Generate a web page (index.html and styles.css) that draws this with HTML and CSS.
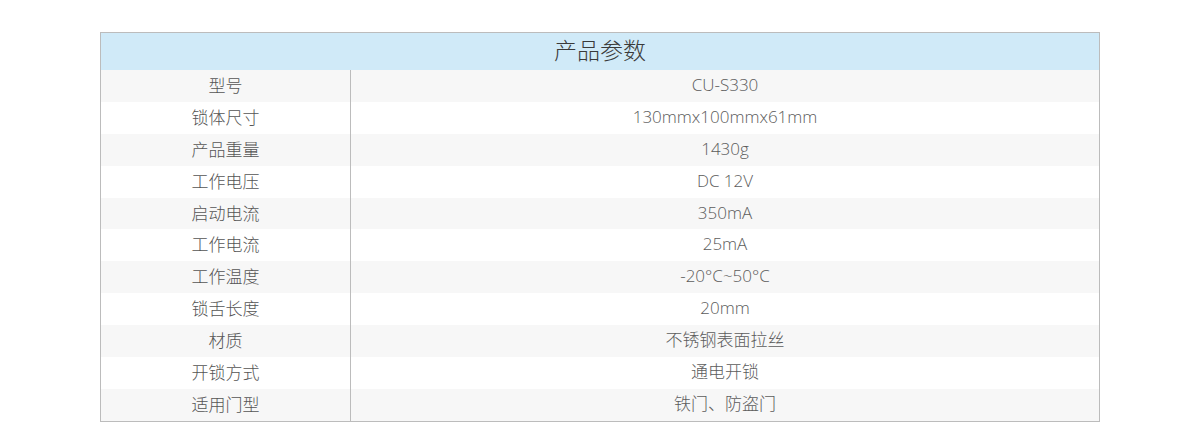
FILE: index.html
```html
<!DOCTYPE html>
<html lang="zh-CN">
<head>
<meta charset="utf-8">
<title>产品参数</title>
<link rel="stylesheet" href="styles.css">
</head>
<body>
<div class="wrap">
  <table class="spec">
    <colgroup>
      <col class="col-k">
      <col class="col-v">
    </colgroup>
    <thead>
      <tr><th colspan="2">产品参数</th></tr>
    </thead>
    <tbody>
      <tr><td class="k">型号</td><td>CU-S330</td></tr>
      <tr><td class="k">锁体尺寸</td><td>130mmx100mmx61mm</td></tr>
      <tr><td class="k">产品重量</td><td>1430g</td></tr>
      <tr><td class="k">工作电压</td><td>DC 12V</td></tr>
      <tr><td class="k">启动电流</td><td>350mA</td></tr>
      <tr><td class="k">工作电流</td><td>25mA</td></tr>
      <tr><td class="k">工作温度</td><td>-20°C~50°C</td></tr>
      <tr><td class="k">锁舌长度</td><td>20mm</td></tr>
      <tr><td class="k">材质</td><td>不锈钢表面拉丝</td></tr>
      <tr><td class="k">开锁方式</td><td>通电开锁</td></tr>
      <tr><td class="k">适用门型</td><td>铁门、防盗门</td></tr>
    </tbody>
  </table>
</div>
</body>
</html>
```
FILE: styles.css
```css
html, body {
  margin: 0;
  padding: 0;
  background: #fff;
}
body {
  font-family: "Open Sans", "Noto Sans CJK SC", sans-serif;
  color: #555;
}
.wrap {
  padding-top: 32px;
  display: flex;
  justify-content: center;
}
.spec {
  width: 1000px;
  border-collapse: collapse;
  table-layout: fixed;
  border: 1px solid #bcbcbc;
}
.col-k {
  width: 250px;
}
.spec th {
  height: 32px;
  padding: 0 0 5px;
  background: #d0eaf8;
  font-weight: 300;
  font-size: 23px;
  line-height: 28px;
  color: #3a3a3a;
  text-align: center;
  font-family: "Noto Sans CJK SC", sans-serif;
}
.spec td {
  height: 29.9px;
  padding: 0 0 2px;
  text-align: center;
  font-size: 17px;
  font-weight: 300;
  line-height: 20px;
  color: #5c5c5c;
}
.spec td.k {
  border-right: 1px solid #bcbcbc;
  font-family: "Noto Sans CJK SC", sans-serif;
  color: #555;
}
.spec tbody tr:nth-child(odd) td {
  background: #f7f7f7;
}
```
